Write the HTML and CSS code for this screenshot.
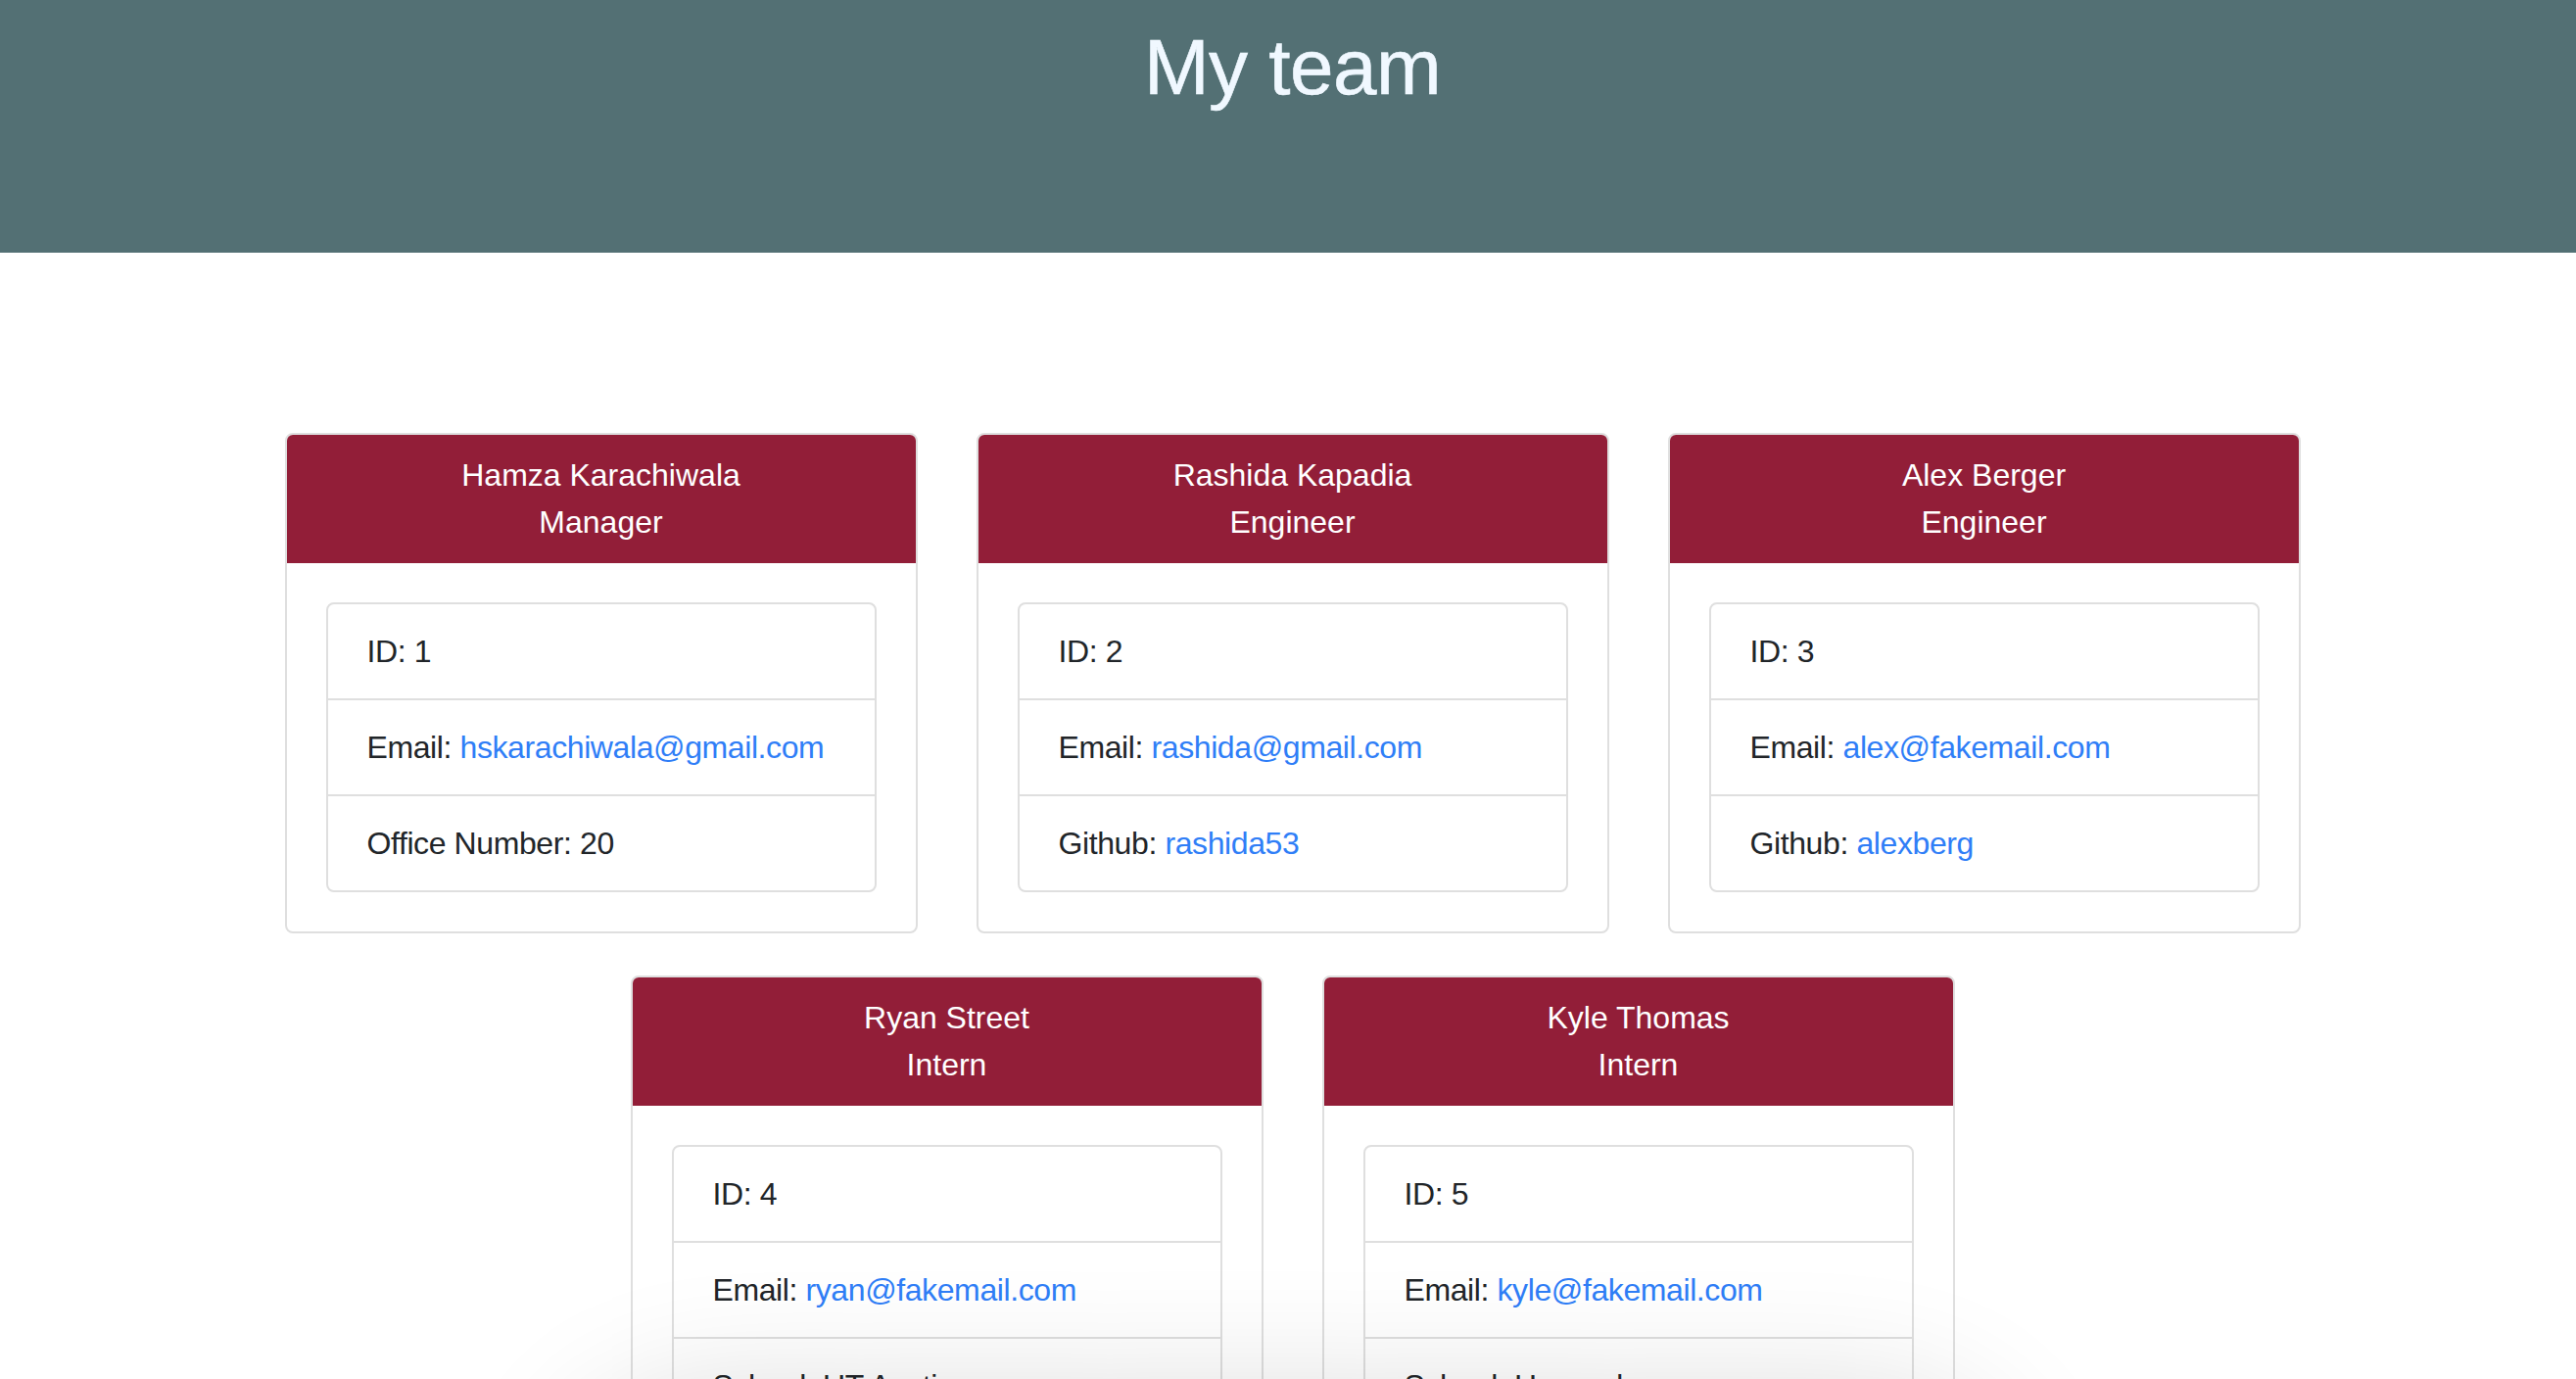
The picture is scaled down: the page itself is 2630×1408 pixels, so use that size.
FILE: index.html
```html
<!DOCTYPE html>
<html lang="en">
<head>
<meta charset="utf-8">
<title>My Team</title>
<link rel="stylesheet" href="styles.css">
</head>
<body>
<header class="banner">
  <h1 class="banner-title">My team</h1>
</header>
<main class="page">
  <section class="team">
    <article class="card">
      <div class="card-header">Hamza Karachiwala<br>Manager</div>
      <div class="card-body">
        <ul class="list-group">
          <li class="list-item">ID: 1</li>
          <li class="list-item">Email: <a href="#">hskarachiwala@gmail.com</a></li>
          <li class="list-item">Office Number: 20</li>
        </ul>
      </div>
    </article>
    <article class="card">
      <div class="card-header">Rashida Kapadia<br>Engineer</div>
      <div class="card-body">
        <ul class="list-group">
          <li class="list-item">ID: 2</li>
          <li class="list-item">Email: <a href="#">rashida@gmail.com</a></li>
          <li class="list-item">Github: <a href="#">rashida53</a></li>
        </ul>
      </div>
    </article>
    <article class="card">
      <div class="card-header">Alex Berger<br>Engineer</div>
      <div class="card-body">
        <ul class="list-group">
          <li class="list-item">ID: 3</li>
          <li class="list-item">Email: <a href="#">alex@fakemail.com</a></li>
          <li class="list-item">Github: <a href="#">alexberg</a></li>
        </ul>
      </div>
    </article>
    <article class="card">
      <div class="card-header">Ryan Street<br>Intern</div>
      <div class="card-body">
        <ul class="list-group">
          <li class="list-item">ID: 4</li>
          <li class="list-item">Email: <a href="#">ryan@fakemail.com</a></li>
          <li class="list-item">School: UT Austin</li>
        </ul>
      </div>
    </article>
    <article class="card">
      <div class="card-header">Kyle Thomas<br>Intern</div>
      <div class="card-body">
        <ul class="list-group">
          <li class="list-item">ID: 5</li>
          <li class="list-item">Email: <a href="#">kyle@fakemail.com</a></li>
          <li class="list-item">School: Harvard</li>
        </ul>
      </div>
    </article>
  </section>
</main>
<div class="shade"></div>
</body>
</html>
```

FILE: styles.css
```css
* { box-sizing: border-box; }

html, body {
  margin: 0;
  padding: 0;
  background: #ffffff;
}

body {
  font-family: "Liberation Sans", Arial, sans-serif;
  font-size: 32px;
  line-height: 48px;
  color: #212529;
  overflow: hidden;
}

.banner {
  height: 258px;
  background: #537074;
  padding: 21px 0 0 9px;
}

.banner-title {
  margin: 0;
  text-align: center;
  font-size: 80px;
  line-height: 96px;
  font-weight: 400;
  color: #f0f8ff;
  letter-spacing: -0.5px;
  -webkit-text-stroke: 0.6px #f0f8ff;
}

.page {
  padding: 184px 0 0 9px;
}

.team {
  width: 2058px;
  margin: 0 auto;
  display: flex;
  flex-wrap: wrap;
  justify-content: center;
  gap: 43px 60px;
}

.card {
  width: 646px;
  border: 2px solid #dfdfdf;
  border-radius: 8px;
  background: #fff;
  overflow: hidden;
}

.card-header {
  background: #921e38;
  color: #ffffff;
  text-align: center;
  padding: 17px 40px 18px;
}

.card-body {
  padding: 40px;
}

.list-group {
  list-style: none;
  margin: 0;
  padding: 0;
  border: 2px solid #dfdfdf;
  border-radius: 8px;
}

.list-item {
  padding: 24px 40px;
  white-space: nowrap;
  letter-spacing: -0.4px;
}

.list-item + .list-item {
  border-top: 2px solid #dfdfdf;
}

.list-item a {
  color: #2f7ef7;
  text-decoration: none;
}

.shade {
  position: fixed;
  left: 620px;
  width: 1390px;
  top: 1470px;
  height: 200px;
  border-radius: 100px;
  box-shadow: 0 0 140px 40px rgba(0, 0, 0, 0.16);
  pointer-events: none;
}
```
